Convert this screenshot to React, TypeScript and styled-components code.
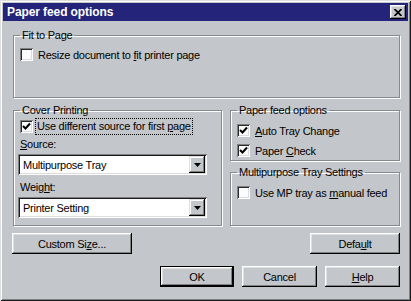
import * as React from "react"
import styled, { createGlobalStyle } from "styled-components"

const FACE = "#c3c6ca"

const GlobalStyle = createGlobalStyle`
    html, body {
        margin: 0;
        padding: 0;
        background: ${FACE};
    }
    body {
        font-family: "Liberation Sans", Arial, sans-serif;
        font-size: 11px;
        letter-spacing: -0.25px;
        color: #000;
    }
`

const Window = styled.div`
    width: 411px;
    height: 301px;
    box-sizing: border-box;
    padding: 3px;
    background: ${FACE};
    box-shadow: inset 1px 1px 0 #dfdfdf, inset -1px -1px 0 #1a1a1a,
        inset 2px 2px 0 #ffffff, inset -2px -2px 0 #808080;
    display: flex;
    flex-direction: column;
`

const TitleBar = styled.div`
    height: 18px;
    flex: none;
    background: #24247a;
    color: #fff;
    display: flex;
    align-items: center;
    justify-content: space-between;
    padding: 0 2px 0 4px;
    font-weight: bold;
    font-size: 12px;
    letter-spacing: -0.1px;
`

const CloseButton = styled.div`
    width: 16px;
    height: 14px;
    background: ${FACE};
    box-shadow: inset -1px -1px 0 #000, inset 1px 1px 0 #fff,
        inset -2px -2px 0 #808080, inset 2px 2px 0 #dfdfdf;
    display: flex;
    align-items: center;
    justify-content: center;
`

const Body = styled.div`
    flex: 1;
    padding: 8px 8px 0 10px;
    display: flex;
    flex-direction: column;
`

const Group = styled.fieldset<{ $h: number }>`
    margin: 0;
    padding: 0 6px;
    min-width: 0;
    box-sizing: border-box;
    height: ${p => p.$h}px;
    border: 1px solid #868a8e;
    box-shadow: 1px 1px 0 #fff, inset 1px 1px 0 #fff;
    display: flex;
    flex-direction: column;
`

const Legend = styled.legend`
    padding: 0 2px;
    line-height: 13px;
    font-size: 11px;
`

const Columns = styled.div`
    display: grid;
    grid-template-columns: 209px 1fr;
    column-gap: 8px;
    margin-top: 6px;
`

const Stack = styled.div`
    display: flex;
    flex-direction: column;
    gap: 5px;
`

const CheckRow = styled.div<{ $top: number }>`
    display: flex;
    align-items: center;
    height: 17px;
    gap: 5px;
    margin-top: ${p => p.$top}px;
    white-space: nowrap;
`

const Box = styled.div`
    width: 13px;
    height: 13px;
    flex: none;
    box-sizing: border-box;
    background: #fbfbfb;
    box-shadow: inset 1px 1px 0 #808080, inset -1px -1px 0 #fff,
        inset 2px 2px 0 #2a2a2a, inset -2px -2px 0 #dcdcdc;
    display: flex;
    align-items: center;
    justify-content: center;
`

const FocusText = styled.span`
    outline: 1px dotted #000;
    padding: 1px 1px 2px;
    margin-left: -2px;
`

const FieldLabel = styled.div<{ $top: number }>`
    line-height: 13px;
    margin-top: ${p => p.$top}px;
`

const Combo = styled.div<{ $top: number }>`
    margin: ${p => p.$top}px 0 0 -2px;
    width: 189px;
    height: 21px;
    box-sizing: border-box;
    padding: 2px;
    background: #fff;
    box-shadow: inset 1px 1px 0 #808080, inset -1px -1px 0 #fff,
        inset 2px 2px 0 #1a1a1a, inset -2px -2px 0 #dcdcdc;
    display: flex;
    align-items: center;
`

const ComboText = styled.div`
    flex: 1;
    padding-left: 3px;
`

const DropButton = styled.div`
    width: 16px;
    height: 17px;
    background: ${FACE};
    box-shadow: inset -1px -1px 0 #000, inset 1px 1px 0 #dfdfdf,
        inset -2px -2px 0 #808080, inset 2px 2px 0 #fff;
    display: flex;
    align-items: center;
    justify-content: center;
`

const ButtonRow = styled.div<{ $top: number; $end?: boolean }>`
    display: flex;
    justify-content: ${p => (p.$end ? "flex-end" : "space-between")};
    gap: 8px;
    margin-top: ${p => p.$top}px;
`

const Button = styled.div<{ $w: number; $default?: boolean }>`
    width: ${p => p.$w}px;
    height: 21px;
    box-sizing: border-box;
    background: ${FACE};
    border: ${p => (p.$default ? "1px solid #000" : "none")};
    box-shadow: inset -1px -1px 0 #000, inset 1px 1px 0 #fff,
        inset -2px -2px 0 #808080, inset 2px 2px 0 #dfdfdf;
    display: flex;
    align-items: center;
    justify-content: center;
    &:first-child {
        margin-left: ${p => (p.$w === 120 ? "-1px" : "0")};
    }
`

const Check = () => (
    <svg width="9" height="9" viewBox="0 0 9 9">
        <path d="M1 4 L3.5 6.5 L8 1.5" fill="none" stroke="#000" strokeWidth="2" />
    </svg>
)

const CheckBox: React.FC<{ checked?: boolean }> = ({ checked }) => (
    <Box>{checked && <Check />}</Box>
)

const Arrow = () => (
    <svg width="7" height="4" viewBox="0 0 7 4">
        <path d="M0 0 H7 L3.5 4 Z" fill="#000" />
    </svg>
)

export default function App() {
    return (
        <>
            <GlobalStyle />
            <Window>
                <TitleBar>
                    <span>Paper feed options</span>
                    <CloseButton>
                        <svg width="8" height="7" viewBox="0 0 8 7">
                            <path d="M0.5 0 L7.5 7 M7.5 0 L0.5 7" stroke="#000" strokeWidth="1.7" />
                        </svg>
                    </CloseButton>
                </TitleBar>
                <Body>
                    <Group $h={69}>
                        <Legend>Fit to Page</Legend>
                        <CheckRow $top={4}>
                            <CheckBox />
                            <span>
                                Resize document to <u>f</u>it printer page
                            </span>
                        </CheckRow>
                    </Group>

                    <Columns>
                        <Group $h={122}>
                            <Legend>Cover Printing</Legend>
                            <CheckRow $top={1}>
                                <CheckBox checked />
                                <FocusText>
                                    Use different source for first <u>p</u>age
                                </FocusText>
                            </CheckRow>
                            <FieldLabel $top={3}>
                                <u>S</u>ource:
                            </FieldLabel>
                            <Combo $top={3}>
                                <ComboText>Multipurpose Tray</ComboText>
                                <DropButton>
                                    <Arrow />
                                </DropButton>
                            </Combo>
                            <FieldLabel $top={6}>
                                Weig<u>h</u>t:
                            </FieldLabel>
                            <Combo $top={3}>
                                <ComboText>Printer Setting</ComboText>
                                <DropButton>
                                    <Arrow />
                                </DropButton>
                            </Combo>
                        </Group>

                        <Stack>
                            <Group $h={57}>
                                <Legend>Paper feed options</Legend>
                                <CheckRow $top={5}>
                                    <CheckBox checked />
                                    <span>
                                        <u>A</u>uto Tray Change
                                    </span>
                                </CheckRow>
                                <CheckRow $top={3}>
                                    <CheckBox checked />
                                    <span>
                                        Paper <u>C</u>heck
                                    </span>
                                </CheckRow>
                            </Group>
                            <Group $h={60}>
                                <Legend>Multipurpose Tray Settings</Legend>
                                <CheckRow $top={5}>
                                    <CheckBox />
                                    <span>
                                        Use MP tray as <u>m</u>anual feed
                                    </span>
                                </CheckRow>
                            </Group>
                        </Stack>
                    </Columns>

                    <ButtonRow $top={7}>
                        <Button $w={120}>
                            Custom Si<u>z</u>e...
                        </Button>
                        <Button $w={90}>
                            Defa<u>u</u>lt
                        </Button>
                    </ButtonRow>
                    <ButtonRow $top={12} $end>
                        <Button $w={74} $default>
                            OK
                        </Button>
                        <Button $w={75}>Cancel</Button>
                        <Button $w={75}>
                            <u>H</u>elp
                        </Button>
                    </ButtonRow>
                </Body>
            </Window>
        </>
    )
}
